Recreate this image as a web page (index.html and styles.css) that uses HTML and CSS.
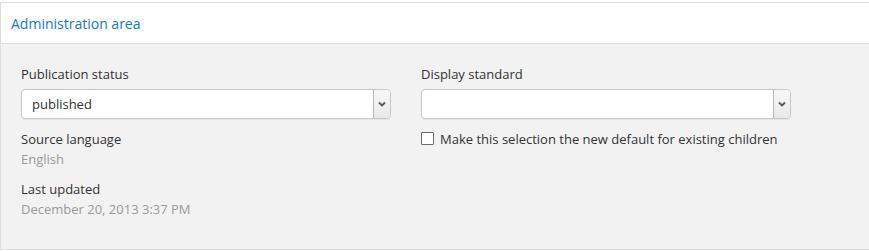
FILE: index.html
```html
<!DOCTYPE html>
<html lang="en">

<head>
  <meta charset="UTF-8">
  <meta name="viewport" content="width=device-width, initial-scale=1.0">
  <title>Administration area</title>
  <link rel="stylesheet" href="styles.css">
</head>

<body>
  <div class="panel">
    <div class="panel-head">
      <a href="#" class="panel-title">Administration area</a>
    </div>
    <div class="panel-body">
      <div class="col">
        <div class="field">
          <label class="label">Publication status</label>
          <div class="select">
            <span class="select-value">published</span>
            <span class="select-arrow">
              <svg width="8" height="6" viewBox="0 0 8 6"><path d="M1 1.5 L4 4.5 L7 1.5" fill="none" stroke="#555" stroke-width="1.8"/></svg>
            </span>
          </div>
        </div>
        <div class="info">
          <div class="label">Source language</div>
          <div class="value">English</div>
        </div>
        <div class="info">
          <div class="label">Last updated</div>
          <div class="value">December 20, 2013 3:37 PM</div>
        </div>
      </div>
      <div class="col">
        <div class="field">
          <label class="label">Display standard</label>
          <div class="select">
            <span class="select-value"></span>
            <span class="select-arrow">
              <svg width="8" height="6" viewBox="0 0 8 6"><path d="M1 1.5 L4 4.5 L7 1.5" fill="none" stroke="#555" stroke-width="1.8"/></svg>
            </span>
          </div>
        </div>
        <label class="check">
          <span class="check-box"></span>
          <span>Make this selection the new default for existing children</span>
        </label>
      </div>
    </div>
  </div>
</body>

</html>
```

FILE: styles.css
```css
* {
  padding: 0;
  margin: 0;
  box-sizing: border-box;
}

body {
  font-family: "Open Sans", "Liberation Sans", sans-serif;
  font-size: 13px;
  line-height: 20px;
  color: #333;
  background: #fff;
}

.panel {
  margin-top: 2px;
  border: 1px solid #dedede;
  border-right: 0;
}

.panel-head {
  height: 41px;
  padding: 11px 10px 0;
  background: #fff;
  border-bottom: 1px solid #dedede;
}

.panel-title {
  font-size: 14px;
  color: #1479c4;
  text-decoration: none;
}

.panel-body {
  display: grid;
  grid-template-columns: 370px 370px;
  column-gap: 30px;
  padding: 20px 20px 30px;
  background: #f2f2f2;
}

.field {
  margin-bottom: 10px;
}

.field .label {
  display: block;
  margin-bottom: 5px;
}

.value {
  color: #9a9a9a;
}

.info + .info {
  margin-top: 10px;
}

.select {
  display: flex;
  height: 30px;
  background: #fff;
  border: 1px solid #c8c8c8;
  border-radius: 4px;
  box-shadow: 0 1px 1px rgba(0, 0, 0, .06);
  overflow: hidden;
}

.select-value {
  flex: 1;
  padding: 4px 10px;
}

.select-arrow {
  display: flex;
  align-items: center;
  justify-content: center;
  width: 17px;
  background: linear-gradient(#f8f8f8, #e9e9e9);
  border-left: 1px solid #b9b9b9;
}

.check {
  display: flex;
  align-items: center;
  gap: 6px;
}

.check-box {
  width: 13px;
  height: 13px;
  background: #fff;
  border: 1px solid #6a6a6a;
  border-radius: 1px;
  margin-top: -2px;
}
```
